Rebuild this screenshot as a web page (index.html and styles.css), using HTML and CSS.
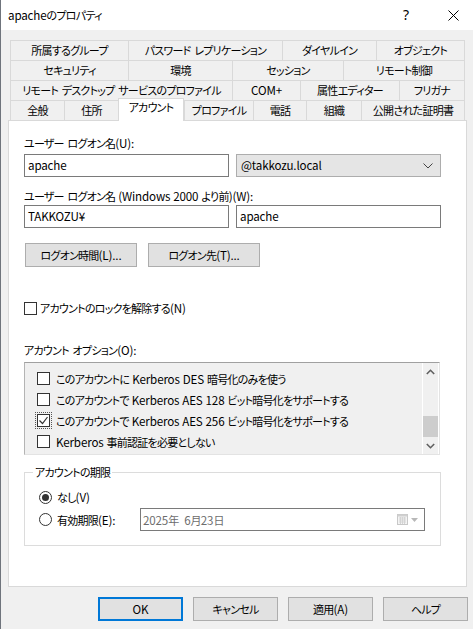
FILE: index.html
```html
<!DOCTYPE html>
<html lang="ja">
<head>
<meta charset="utf-8">
<title>apacheのプロパティ</title>
<link rel="stylesheet" href="styles.css">
</head>
<body>
<div class="window">
  <div class="titlebar">
    <span class="title"><span class="en">apache</span>のプロパティ</span>
    <span class="help">?</span>
    <span class="close"><svg width="11" height="11" viewBox="0 0 11 11"><path d="M0.5 0.5 L10.5 10.5 M10.5 0.5 L0.5 10.5" stroke="#000" stroke-width="1"/></svg></span>
  </div>
  <div class="body">
    <div class="tabs">
      <div class="tab-row row1">
        <div class="tab">所属するグループ</div>
        <div class="tab">パスワード レプリケーション</div>
        <div class="tab">ダイヤルイン</div>
        <div class="tab last">オブジェクト</div>
      </div>
      <div class="tab-row row2">
        <div class="tab">セキュリティ</div>
        <div class="tab">環境</div>
        <div class="tab">セッション</div>
        <div class="tab last">リモート制御</div>
      </div>
      <div class="tab-row row3">
        <div class="tab">リモート デスクトップ サービスのプロファイル</div>
        <div class="tab"><span class="en">COM+</span></div>
        <div class="tab">属性エディター</div>
        <div class="tab last">フリガナ</div>
      </div>
      <div class="tab-row row4">
        <div class="tab">全般</div>
        <div class="tab">住所</div>
        <div class="tab selected">アカウント</div>
        <div class="tab">プロファイル</div>
        <div class="tab">電話</div>
        <div class="tab">組織</div>
        <div class="tab last">公開された証明書</div>
      </div>
    </div>

    <div class="panel">
      <div class="label l1">ユーザー ログオン名<span class="en">(U):</span></div>
      <div class="field-row r1">
        <div class="input"><span class="en">apache</span></div>
        <div class="select"><span class="en">@takkozu.local</span>
          <svg class="chev" width="10" height="6" viewBox="0 0 10 6"><path d="M0.5 0.5 L5 5 L9.5 0.5" fill="none" stroke="#444" stroke-width="1"/></svg>
        </div>
      </div>
      <div class="label l2">ユーザー ログオン名<span class="en"> (Windows 2000 </span>より前<span class="en">)(W):</span></div>
      <div class="field-row r2">
        <div class="input"><span class="en">TAKKOZU¥</span></div>
        <div class="input"><span class="en">apache</span></div>
      </div>
      <div class="btn-row">
        <div class="btn wide">ログオン時間<span class="en">(L)...</span></div>
        <div class="btn wide">ログオン先<span class="en">(T)...</span></div>
      </div>
      <div class="check-row lock">
        <span class="checkbox"></span><span>アカウントのロックを解除する<span class="en">(N)</span></span>
      </div>
      <div class="label l3">アカウント オプション<span class="en">(O):</span></div>
      <div class="listbox">
        <div class="list-items">
          <div class="list-item"><span class="checkbox"></span><span>このアカウントに<span class="en"> Kerberos DES </span>暗号化のみを使う</span></div>
          <div class="list-item"><span class="checkbox"></span><span>このアカウントで<span class="en"> Kerberos AES 128 </span>ビット暗号化をサポートする</span></div>
          <div class="list-item"><span class="checkbox checked focus"><svg width="11" height="11" viewBox="0 0 11 11"><path d="M1.5 5.5 L4.5 8.5 L9.5 2" fill="none" stroke="#333" stroke-width="1.2"/></svg></span><span>このアカウントで<span class="en"> Kerberos AES 256 </span>ビット暗号化をサポートする</span></div>
          <div class="list-item"><span class="checkbox"></span><span><span class="en">Kerberos </span>事前認証を必要としない</span></div>
        </div>
        <div class="scrollbar">
          <div class="sb-arrow"><svg width="9" height="6" viewBox="0 0 9 6"><path d="M0.8 5 L4.5 1.3 L8.2 5" fill="none" stroke="#606060" stroke-width="1.6"/></svg></div>
          <div class="sb-track"><div class="sb-thumb"></div></div>
          <div class="sb-arrow"><svg width="9" height="6" viewBox="0 0 9 6"><path d="M0.8 1 L4.5 4.7 L8.2 1" fill="none" stroke="#606060" stroke-width="1.6"/></svg></div>
        </div>
      </div>
      <div class="group">
        <div class="legend">アカウントの期限</div>
        <div class="radio-row first">
          <span class="radio on"></span><span>なし<span class="en">(V)</span></span>
        </div>
        <div class="radio-row second">
          <div class="radio-label"><span class="radio"></span><span>有効期限<span class="en">(E):</span></span></div>
          <div class="datepicker">
            <span class="date-text"><span class="en">2025</span>年<span class="en">&nbsp; 6</span>月<span class="en">23</span>日</span>
            <svg class="cal" width="11" height="11" viewBox="0 0 11 11"><rect x="0.5" y="0.5" width="10" height="10" fill="#f4f4f4" stroke="#c8c8c8"/><rect x="0.5" y="0.5" width="10" height="2" fill="#d0d0d0"/><path d="M2 4 H9 M2 6 H9 M2 8 H9 M3.5 3 V10 M5.5 3 V10 M7.5 3 V10" stroke="#d4d4d4" stroke-width="1"/></svg>
            <svg class="drop" width="7" height="4" viewBox="0 0 7 4"><path d="M0 0 H7 L3.5 4 Z" fill="#b8b8b8"/></svg>
          </div>
        </div>
      </div>
    </div>

    <div class="footer">
      <div class="btn foot default"><span class="en">OK</span></div>
      <div class="btn foot">キャンセル</div>
      <div class="btn foot">適用<span class="en">(A)</span></div>
      <div class="btn foot">ヘルプ</div>
    </div>
  </div>
</div>
</body>
</html>
```

FILE: styles.css
```css
html, body {
  margin: 0;
  padding: 0;
}
body {
  width: 473px;
  height: 629px;
  overflow: hidden;
  background: #f0f0f0;
  font-family: "Noto Sans CJK JP", "Noto Sans", sans-serif;
  font-size: 11px;
  letter-spacing: -0.75px;
  word-spacing: 2px;
  color: #000;
  font-feature-settings: "palt";
}
.en {
  font-size: 11.6px;
  letter-spacing: -0.15px;
  word-spacing: 0.5px;
}
.window {
  width: 473px;
  height: 629px;
  box-sizing: border-box;
  border-left: 1px solid #6f747c;
  background: #f0f0f0;
}
.titlebar {
  height: 30px;
  background: #fff;
  display: flex;
  align-items: center;
  padding-left: 7px;
}
.title {
  flex: 1;
  line-height: 16px;
}
.help {
  width: 12px;
  font-size: 14px;
  line-height: 16px;
  margin-right: 33px;
  font-family: "Noto Sans", sans-serif;
  letter-spacing: 0;
}
.close {
  display: flex;
  margin-right: 14px;
}
.body {
  padding-top: 10px;
}
.tabs {
  margin-left: 9px;
  width: 455px;
}
.tab-row {
  display: grid;
  height: 20px;
}
.row1 { grid-template-columns: 118px 154px 94px 89px; }
.row2 { grid-template-columns: 118px 104px 111px 122px; }
.row3 { grid-template-columns: 222px 68px 99px 66px; }
.row4 { grid-template-columns: 54px 54px 66px 69px 53px 55px 104px; }
.tab {
  box-sizing: border-box;
  border-top: 1px solid #d9d9d9;
  border-left: 1px solid #d9d9d9;
  background: #f0f0f0;
  text-align: center;
  line-height: 18px;
  white-space: nowrap;
  overflow: hidden;
}
.tab.last {
  border-right: 1px solid #d9d9d9;
}
.tab.selected {
  position: relative;
  z-index: 1;
  background: #fff;
  margin: -2px 0 -1px 0;
  border-right: 1px solid #d9d9d9;
  line-height: 17px;
}
.panel {
  margin-left: 7px;
  width: 459px;
  height: 467px;
  box-sizing: border-box;
  border: 1px solid #d9d9d9;
  background: #fff;
  padding: 14px 0 0 15px;
}
.label {
  height: 16px;
  line-height: 16px;
}
.l2 { margin-top: 11px; }
.l3 { margin-top: 26px; }
.field-row {
  display: flex;
  gap: 7px;
}
.r1 { margin-top: 3px; }
.r2 { margin-top: 1px; }
.input, .select {
  width: 205px;
  height: 23px;
  box-sizing: border-box;
  border: 1px solid #7a7a7a;
  background: #fff;
  line-height: 21px;
  padding-left: 3px;
}
.select {
  border-color: #adadad;
  background: #e5e5e5;
  display: flex;
  align-items: center;
  justify-content: space-between;
  padding-right: 7px;
  padding-left: 4px;
}
.chev { flex: none; }
.btn-row {
  display: flex;
  gap: 11px;
  margin-top: 15px;
  margin-left: 1px;
}
.btn {
  height: 24px;
  box-sizing: border-box;
  border: 1px solid #adadad;
  background: #e1e1e1;
  text-align: center;
  line-height: 22px;
}
.btn.wide { width: 112px; }
.check-row {
  display: flex;
  align-items: center;
  height: 16px;
  gap: 3px;
}
.lock { margin-top: 33px; }
.checkbox {
  width: 13px;
  height: 13px;
  box-sizing: border-box;
  border: 1px solid #333;
  background: #fff;
  flex: none;
  display: flex;
  align-items: center;
  justify-content: center;
}
.checkbox.focus {
  outline: 1px dotted #555;
  outline-offset: 1px;
}
.listbox {
  margin-top: 4px;
  width: 416px;
  height: 93px;
  box-sizing: border-box;
  border: 1px solid #e3e3e3;
  border-top-color: #a0a0a0;
  border-left-color: #b4b4b4;
  background: #f0f0f0;
  display: flex;
}
.list-items {
  flex: 1;
  padding: 5px 0 0 12px;
}
.list-item {
  height: 21px;
  display: flex;
  align-items: center;
  gap: 6px;
  white-space: nowrap;
}
.scrollbar {
  width: 17px;
  box-sizing: border-box;
  border-left: 1px solid #fff;
  border-right: 1px solid #fff;
  display: flex;
  flex-direction: column;
}
.sb-arrow {
  height: 17px;
  display: flex;
  align-items: center;
  justify-content: center;
}
.sb-track {
  flex: 1;
}
.sb-thumb {
  margin-top: 36px;
  height: 21px;
  background: #cdcdcd;
}
.group {
  margin-top: 17px;
  width: 417px;
  height: 74px;
  box-sizing: border-box;
  border: 1px solid #dcdcdc;
  padding-left: 14px;
}
.legend {
  width: fit-content;
  margin: -9px 0 0 -6px;
  padding: 0 2px;
  background: #fff;
  line-height: 16px;
}
.radio-row {
  display: flex;
  align-items: center;
  gap: 5px;
}
.radio-row.first {
  margin-top: 9px;
  height: 16px;
}
.radio-row.second {
  margin-top: 3px;
  height: 23px;
  gap: 0;
}
.radio-label {
  width: 101px;
  display: flex;
  align-items: center;
  gap: 5px;
}
.radio {
  width: 13px;
  height: 13px;
  box-sizing: border-box;
  border: 1px solid #333;
  border-radius: 50%;
  background: #fff;
  flex: none;
  display: flex;
  align-items: center;
  justify-content: center;
}
.radio.on::after {
  content: "";
  width: 7px;
  height: 7px;
  border-radius: 50%;
  background: #333;
}
.datepicker {
  width: 285px;
  height: 23px;
  box-sizing: border-box;
  border: 1px solid #7a7a7a;
  background: #fff;
  display: flex;
  align-items: center;
  padding-left: 2px;
  padding-right: 6px;
}
.date-text {
  flex: 1;
  color: #6d6d6d;
}
.cal { margin-right: 3px; }
.footer {
  display: flex;
  justify-content: flex-end;
  gap: 10px;
  margin-top: 10px;
  padding-right: 5px;
}
.btn.foot { width: 85px; }
.btn.default {
  border: 2px solid #0078d7;
  line-height: 20px;
}
```
